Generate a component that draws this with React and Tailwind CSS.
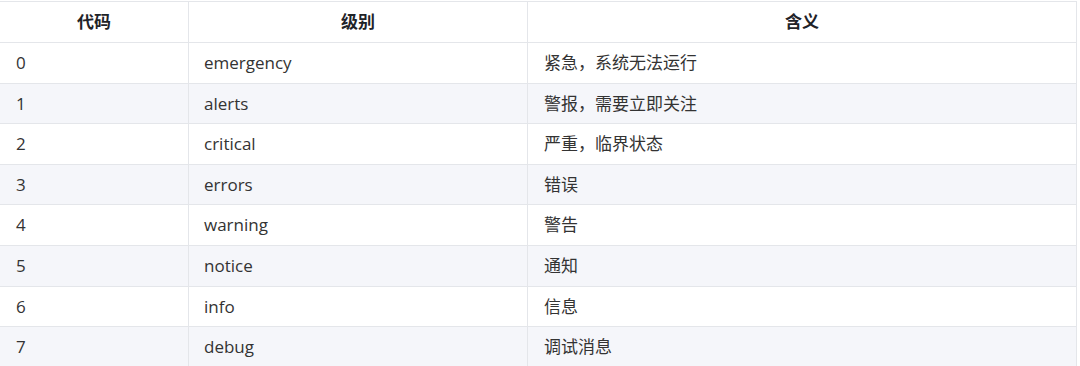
const rows = [
  ["0", "emergency", "紧急，系统无法运行"],
  ["1", "alerts", "警报，需要立即关注"],
  ["2", "critical", "严重，临界状态"],
  ["3", "errors", "错误"],
  ["4", "warning", "警告"],
  ["5", "notice", "通知"],
  ["6", "info", "信息"],
  ["7", "debug", "调试消息"],
];

export default function App() {
  return (
    <div
      className="w-[1080px] h-[366px] bg-white overflow-hidden pt-px text-[17px] text-[#333333]"
      style={{ fontFamily: '"Open Sans", "Noto Sans CJK SC", sans-serif' }}
    >
      <div className="w-[1077px] border-t border-r border-[#e4e6ea]">
        <div className="flex h-[41px] border-b border-[#e4e6ea] font-bold text-[#1f2328]">
          <div className="w-[189px] border-r border-[#e4e6ea] flex items-center justify-center">代码</div>
          <div className="w-[339px] border-r border-[#e4e6ea] flex items-center justify-center">级别</div>
          <div className="flex-1 flex items-center justify-center">含义</div>
        </div>
        {rows.map((r, i) => (
          <div
            key={r[0]}
            className={`flex h-[40.6px] border-b border-[#e4e6ea] ${i % 2 ? "bg-[#f5f6fa]" : "bg-white"}`}
          >
            <div className="w-[189px] border-r border-[#e4e6ea] flex items-center pl-4">{r[0]}</div>
            <div className="w-[339px] border-r border-[#e4e6ea] flex items-center pl-[15px]">{r[1]}</div>
            <div className="flex-1 flex items-center pl-4">{r[2]}</div>
          </div>
        ))}
      </div>
    </div>
  );
}
